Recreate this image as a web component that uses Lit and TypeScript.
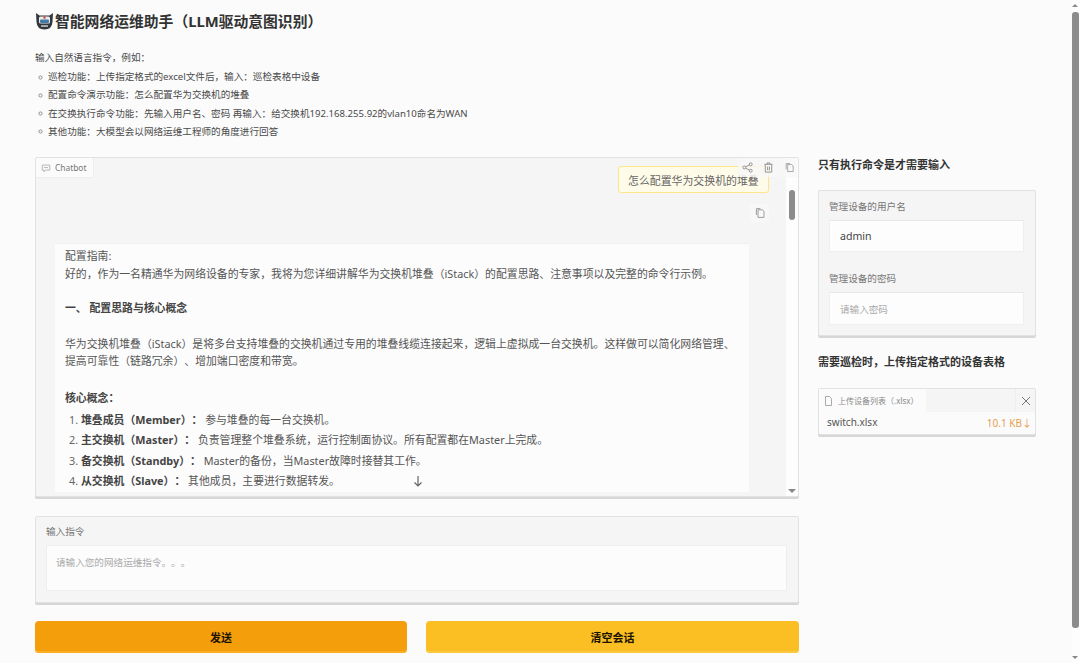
import { LitElement, html, css, svg } from "lit";
import { customElement } from "lit/decorators.js";

const copyIcon = svg`<path d="M5 3.5h5.5l2 2V13H5z M3 2h5 M3 2v8" fill="none" stroke="currentColor" stroke-width="1"/>`;

@customElement("app-root")
export class AppRoot extends LitElement {
  static styles = css`
    :host {
      display: flex;
      width: 1080px;
      height: 663px;
      overflow: hidden;
      background: #fbfbfb;
      color: #444;
      font-family: "Noto Sans", "Noto Sans CJK SC", sans-serif;
      font-size: 11px;
      text-spacing-trim: space-all;
    }
    * { box-sizing: border-box; }
    .page { flex: 1; min-width: 0; padding: 11px 36px 0 35px; }
    h1 {
      margin: 0;
      display: flex;
      align-items: center;
      gap: 1px;
      height: 21px;
      font-size: 14.8px;
      line-height: 21px;
      font-weight: 700;
      color: #333;
    }
    .intro { margin-top: 17px; height: 92px; font-size: 9.6px; line-height: 18.2px; color: #4a4a4a; }
    .intro ul { margin: 1px 0 0; padding: 0 0 0 3px; list-style: none; }
    .intro li { display: flex; align-items: center; gap: 5px; }
    .intro li::before {
      content: "";
      width: 3px;
      height: 3px;
      border: 1px solid #777;
      border-radius: 50%;
      box-sizing: content-box;
      flex: none;
      transform: scale(0.8);
    }
    .cols { display: grid; grid-template-columns: 764px 218px; gap: 19px; margin-top: 16px; }
    .panel {
      background: #f5f5f5;
      border: 1px solid #e2e2e2;
      border-radius: 2px;
      box-shadow: 0 2px 0 #d6d6d6;
    }
    .chat { position: relative; height: 340px; display: flex; overflow: hidden; }
    .scroll { flex: 1; min-width: 0; padding: 8px 17px 0 19px; display: flex; flex-direction: column; }
    .track { width: 12px; background: #fdfdfd; position: relative; flex: none; }
    .thumb { position: absolute; left: 3px; top: 32px; width: 6px; height: 30px; border-radius: 3px; background: #8c8c8c; }
    .down { position: absolute; left: 2px; bottom: 3px; width: 0; height: 0; border: 4px solid transparent; border-top: 4px solid #888; border-bottom: 0; }
    .badge {
      position: absolute; left: 0; top: 0; height: 20px; width: 58px;
      background: #fbfbfb; border-right: 1px solid #eee; border-bottom: 1px solid #eee;
      display: flex; align-items: center; gap: 4px; padding-left: 5px;
      font-size: 8.4px; color: #777;
    }
    .tools {
      position: absolute; right: 1px; top: 0; width: 59px; height: 19px;
      background: rgba(247,247,247,.8);
      display: flex; align-items: center; gap: 10px; padding-left: 4px; color: #8c8c8c;
    }
    .bubble {
      align-self: flex-end;
      height: 27px; width: 151px;
      background: #fffbe9;
      border: 1px solid #fde68a;
      border-radius: 3px;
      padding: 0 9px;
      display: flex; align-items: center;
      font-size: 10.9px; color: #666; white-space: nowrap;
    }
    .cp {
      align-self: flex-end;
      margin-top: 11px;
      width: 19px; height: 18px;
      background: #f8f8f8; border-radius: 2px;
      display: flex; align-items: center; justify-content: center; color: #888;
    }
    .card {
      margin: 21px 20px 0 0;
      background: #fcfcfc;
      padding: 3px 10px 0;
      line-height: 17.5px;
      font-size: 10.85px;
      color: #555;
      flex: none;
      border-top: 1px solid #f0f0f0;
    }
    .card p { margin: 0; }
    .card strong { color: #444; font-weight: 700; }
    .gap-h { margin-top: 17px !important; }
    .gap-p { margin-top: 18px !important; }
    .gap-c { margin-top: 19px !important; }
    .card ol { margin: 4px 0 0; padding: 0 0 0 16px; }
    .card li { line-height: 20.4px; }
    .card li::marker { color: #666; }
    .arrow { position: absolute; left: 374px; top: 315px; width: 16px; height: 16px; color: #666; }
    .inbox { margin-top: 19px; height: 87px; padding: 8px 11px 0 10px; }
    .lab { font-size: 9.6px; line-height: 14px; color: #777; }
    .ta {
      margin-top: 6px; height: 46px; background: #fcfcfc; border: 1px solid #eee;
      padding: 10px 9px; font-size: 9.6px; line-height: 14px; color: #aaa;
    }
    .btns { display: grid; grid-template-columns: 372px 373px; gap: 19px; margin-top: 18px; }
    .btn {
      height: 32px; border: 0; border-radius: 4px;
      font: 700 11px "Noto Sans", "Noto Sans CJK SC", sans-serif; color: #1c1400;
      display: flex; align-items: center; justify-content: center;
    }
    .b1 { background: #f59e0b; box-shadow: inset 0 -2px 0 #fbb024; }
    .b2 { background: #fbbf24; box-shadow: inset 0 -2px 0 #fcc83f; }
    h2 { margin: 0; font-size: 11px; line-height: 15px; font-weight: 700; color: #333; }
    .fields { margin-top: 18px; height: 146px; padding: 9px 11px 0 10px; }
    .inp {
      margin-top: 6px; height: 32px; background: #fdfdfd; border: 1px solid #efefef; border-top-color: #e8e8e8;
      padding: 0 10px; display: flex; align-items: center; font-size: 10.6px; color: #444;
    }
    .inp.ph { color: #aaa; font-size: 9.6px; height: 33px; }
    .lab2 { margin-top: 20px; }
    .h2b { margin-top: 18px; }
    .file { margin-top: 19px; height: 47px; background: #fbfbfb; }
    .fhead { height: 23px; display: flex; justify-content: space-between; background: #f5f5f5; }
    .ftab {
      width: 107px; background: #fbfbfb; display: flex; align-items: center; gap: 5px; padding-left: 5px;
      font-size: 8px; color: #888; white-space: nowrap;
    }
    .fx { width: 20px; display: flex; align-items: center; justify-content: center; color: #777; border-left: 1px solid #eee; }
    .frow {
      height: 20px; display: flex; justify-content: space-between; align-items: center; padding: 0 3px 0 8px;
      font-size: 10px; color: #555;
    }
    .sz { color: #e8a050; }
    .pagebar { width: 8px; flex: none; position: relative; background: #fdfdfd; }
    .pt { position: absolute; left: 0; top: 12px; width: 7px; height: 616px; border-radius: 3px; background: #8c8c8c; }
    .ua { position: absolute; left: 0; top: 4px; border: 3.5px solid transparent; border-bottom: 3.5px solid #888; border-top: 0; }
    .da { position: absolute; left: 0; bottom: 4px; border: 3.5px solid transparent; border-top: 3.5px solid #888; border-bottom: 0; }
  `;

  render() {
    return html`
      <div class="page">
        <h1>
          <svg width="19" height="19" viewBox="0 0 19 19">
            <path d="M1 1l3.5 2.5h10L18 1l-.5 9q-.5 7.5-8 7.5t-8-7.5z" fill="#33383d"/>
            <rect x="4" y="4.5" width="11" height="7" rx="1.5" fill="#ececec"/>
            <rect x="5" y="7.5" width="9" height="3.5" rx="1" fill="#3f7aa8"/>
            <rect x="8.5" y="4.5" width="2" height="2.2" fill="#d23b3b"/>
            <rect x="6" y="13" width="7" height="2" rx=".5" fill="#a8a8a8"/>
          </svg>
          <span>智能网络运维助手（LLM驱动意图识别）</span>
        </h1>
        <div class="intro">
          输入自然语言指令，例如：
          <ul>
            <li>巡检功能：上传指定格式的excel文件后，输入：巡检表格中设备</li>
            <li>配置命令演示功能：怎么配置华为交换机的堆叠</li>
            <li>在交换执行命令功能：先输入用户名、密码 再输入：给交换机192.168.255.92的vlan10命名为WAN</li>
            <li>其他功能：大模型会以网络运维工程师的角度进行回答</li>
          </ul>
        </div>
        <div class="cols">
          <div>
            <div class="panel chat">
              <div class="scroll">
                <div class="bubble">怎么配置华为交换机的堆叠</div>
                <div class="cp"><svg width="12" height="12" viewBox="0 0 15 15">${copyIcon}</svg></div>
                <div class="card">
                  <p>配置指南:</p>
                  <p>好的，作为一名精通华为网络设备的专家，我将为您详细讲解华为交换机堆叠（iStack）的配置思路、注意事项以及完整的命令行示例。</p>
                  <p class="gap-h"><strong>一、 配置思路与核心概念</strong></p>
                  <p class="gap-p">华为交换机堆叠（iStack）是将多台支持堆叠的交换机通过专用的堆叠线缆连接起来，逻辑上虚拟成一台交换机。这样做可以简化网络管理、提高可靠性（链路冗余）、增加端口密度和带宽。</p>
                  <p class="gap-c"><strong>核心概念：</strong></p>
                  <ol>
                    <li><strong>堆叠成员（Member）：</strong> 参与堆叠的每一台交换机。</li>
                    <li><strong>主交换机（Master）：</strong> 负责管理整个堆叠系统，运行控制面协议。所有配置都在Master上完成。</li>
                    <li><strong>备交换机（Standby）：</strong> Master的备份，当Master故障时接替其工作。</li>
                    <li><strong>从交换机（Slave）：</strong> 其他成员，主要进行数据转发。</li>
                  </ol>
                </div>
              </div>
              <div class="track"><div class="thumb"></div><div class="down"></div></div>
              <div class="badge">
                <svg width="10" height="10" viewBox="0 0 12 12" fill="none" stroke="#aaa"><path d="M1.5 2.5h9v6h-5l-2 2v-2h-2z"/><path d="M3.5 5.5h5" /></svg>
                <span>Chatbot</span>
              </div>
              <div class="tools">
                <svg width="11" height="11" viewBox="0 0 12 12" fill="none" stroke="currentColor"><circle cx="9.5" cy="2.5" r="1.6"/><circle cx="2.5" cy="6" r="1.6"/><circle cx="9.5" cy="9.5" r="1.6"/><path d="M4 5.2l4-2M4 6.8l4 2"/></svg>
                <svg width="11" height="11" viewBox="0 0 12 12" fill="none" stroke="currentColor"><path d="M2.5 3v8h7V3M1.5 2.5h9M4.5 2.5V1h3v1.5M5 5v4M7 5v4"/></svg>
                <svg width="11" height="11" viewBox="0 0 15 15">${copyIcon}</svg>
              </div>
              <svg class="arrow" viewBox="0 0 16 16" fill="none" stroke="currentColor" stroke-width="1.2"><path d="M8 3v10M4.5 9.5L8 13l3.5-3.5"/></svg>
            </div>
            <div class="panel inbox">
              <div class="lab">输入指令</div>
              <div class="ta">请输入您的网络运维指令。。。</div>
            </div>
            <div class="btns">
              <div class="btn b1">发送</div>
              <div class="btn b2">清空会话</div>
            </div>
          </div>
          <div>
            <h2>只有执行命令是才需要输入</h2>
            <div class="panel fields">
              <div class="lab">管理设备的用户名</div>
              <div class="inp">admin</div>
              <div class="lab lab2">管理设备的密码</div>
              <div class="inp ph">请输入密码</div>
            </div>
            <h2 class="h2b">需要巡检时，上传指定格式的设备表格</h2>
            <div class="panel file">
              <div class="fhead">
                <div class="ftab">
                  <svg width="9" height="10" viewBox="0 0 9 10" fill="none" stroke="#aaa"><path d="M1.5.5h4l2 2v7h-6z"/></svg>
                  <span>上传设备列表（.xlsx）</span>
                </div>
                <div class="fx"><svg width="10" height="10" viewBox="0 0 10 10" stroke="currentColor" fill="none"><path d="M1 1l8 8M9 1L1 9"/></svg></div>
              </div>
              <div class="frow"><span>switch.xlsx</span><span class="sz">10.1 KB↓</span></div>
            </div>
          </div>
        </div>
      </div>
      <div class="pagebar"><div class="ua"></div><div class="pt"></div><div class="da"></div></div>
    `;
  }
}
